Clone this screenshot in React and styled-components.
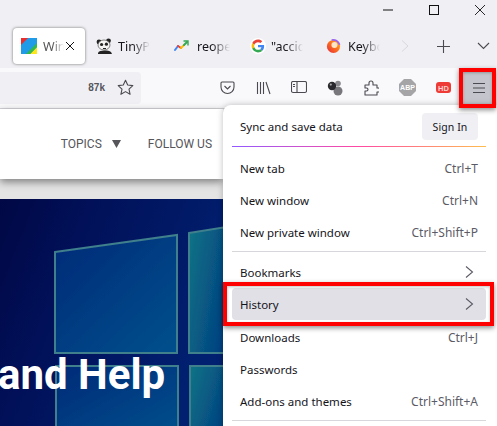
import React from "react";
import styled, { createGlobalStyle } from "styled-components";

const Global = createGlobalStyle`
  html, body { margin: 0; padding: 0; background: #fff; }
  * { box-sizing: border-box; }
  #root { width: 497px; height: 426px; }
`;

const Windowed = styled.div`
  position: relative;
  width: 497px;
  height: 426px;
  overflow: hidden;
  background: #f0f0f4;
  display: flex;
  flex-direction: column;
  font-family: "Noto Sans", "Open Sans", sans-serif;
  color: #15141a;
`;

const TitleBar = styled.div`
  height: 28px;
  display: flex;
  justify-content: flex-end;
  flex: none;
  margin-right: -6px;
`;
const WinButton = styled.div`
  width: 46px;
  height: 20px;
  display: flex;
  align-items: center;
  justify-content: center;
  color: #111;
`;

const TabStrip = styled.div`
  height: 40px;
  flex: none;
  display: flex;
  align-items: flex-start;
  padding-left: 13px;
`;
const ActiveTab = styled.div`
  width: 72px;
  height: 36px;
  background: #fff;
  border-radius: 4px;
  box-shadow: 0 0 3px rgba(0, 0, 0, 0.55);
  display: flex;
  align-items: center;
  padding-left: 8px;
  gap: 6px;
  flex: none;
`;
const Tab = styled.div`
  width: ${(p) => p.$w}px;
  height: 36px;
  display: flex;
  align-items: center;
  gap: ${(p) => p.$gap}px;
  padding-left: ${(p) => p.$pad}px;
  flex: none;
`;
const TabLabel = styled.span`
  font-size: 12.5px;
  width: ${(p) => p.$w}px;
  white-space: nowrap;
  color: ${(p) => p.$c || "#15141a"};
  -webkit-mask-image: linear-gradient(to right, #000 45%, transparent 100%);
  mask-image: linear-gradient(to right, #000 45%, transparent 100%);
`;
const CloseGlyph = styled.span`
  display: flex;
  margin-left: -5px;
`;
const StripTools = styled.div`
  display: flex;
  align-items: center;
  height: 36px;
  flex: none;
  margin-left: 9px;
`;
const StripButton = styled.div`
  width: ${(p) => p.$w}px;
  display: flex;
  justify-content: center;
  align-items: center;
`;

const Toolbar = styled.div`
  height: 41px;
  flex: none;
  background: #f9f9fb;
  border-bottom: 1px solid #d4d4d8;
  display: flex;
  align-items: center;
  padding-bottom: 1px;
`;
const UrlBar = styled.div`
  width: 141px;
  height: 32px;
  background: #f0f0f4;
  border-radius: 0 4px 4px 0;
  display: flex;
  align-items: center;
  justify-content: flex-end;
  padding-right: 7px;
  gap: 12px;
  flex: none;
`;
const Count = styled.span`
  font: 700 10px "Liberation Sans", Arial, sans-serif;
  color: #55555c;
`;
const ToolIcons = styled.div`
  margin-left: 68px;
  display: flex;
  align-items: center;
`;
const ToolIcon = styled.div`
  width: 36px;
  height: 32px;
  display: flex;
  align-items: center;
  justify-content: center;
  flex: none;
`;
const MenuButton = styled.div`
  width: 32px;
  height: 36px;
  background: #c4c4cc;
  display: flex;
  align-items: center;
  justify-content: center;
  margin-left: 2px;
  flex: none;
`;

const Page = styled.div`
  flex: 1;
  background: #e4e4e4;
  display: flex;
  flex-direction: column;
  width: 223px;
`;
const SiteHeader = styled.div`
  height: 70px;
  flex: none;
  background: #fff;
  box-shadow: 0 3px 8px rgba(0, 0, 0, 0.45);
  display: flex;
  align-items: center;
  justify-content: flex-end;
  padding: 0 11px 0 0;
  font: 400 12px Roboto, sans-serif;
  color: #55555a;
  position: relative;
`;
const NavItem = styled.span`
  display: flex;
  align-items: center;
  gap: 10px;
  margin-left: ${(p) => p.$ml || 0}px;
`;
const Spacer = styled.div`
  height: 20px;
  flex: none;
`;
const Hero = styled.div`
  flex: 1;
  position: relative;
  overflow: hidden;
  background: #010f55;
  display: flex;
  align-items: flex-end;
`;
const HeroArt = styled.svg`
  position: absolute;
  inset: 0;
`;
const HeroTitle = styled.h1`
  position: relative;
  margin: 0 0 26px -2px;
  font: 700 42px/50px Roboto, sans-serif;
  color: #fff;
  white-space: nowrap;
`;

const Menu = styled.div`
  position: absolute;
  left: 223px;
  top: 105px;
  width: 274px;
  height: 330px;
  background: #fff;
  border-radius: 8px 0 0 0;
  box-shadow: 0 0 6px rgba(0, 0, 0, 0.25);
  padding: 0 11px 0 9px;
  font-size: 11.5px;
`;
const SyncRow = styled.div`
  height: 41px;
  padding: 2px 8px 0;
  display: flex;
  justify-content: space-between;
  align-items: center;
`;
const SignIn = styled.div`
  width: 56px;
  height: 27px;
  background: #f0f0f4;
  border-radius: 4px;
  display: flex;
  align-items: center;
  justify-content: center;
  font-size: 10.5px;
  letter-spacing: 0.1px;
`;
const GradientRule = styled.div`
  height: 1px;
  background: linear-gradient(to right, #9059ff, #ff4aa2, #ffbd4f);
  margin-bottom: 5px;
`;
const Rule = styled.div`
  height: 1px;
  background: #d7d7db;
  margin: ${(p) => p.$m};
`;
const Row = styled.div`
  height: 32px;
  padding: 0 8px;
  display: flex;
  align-items: center;
  justify-content: space-between;
  border-radius: 4px;
  background: ${(p) => (p.$hover ? "#e0e0e6" : "transparent")};
  margin-bottom: ${(p) => (p.$hover ? "1px" : "0")};
`;
const Shortcut = styled.span`
  color: #5b5b66;
  font-size: 12px;
`;
const ChevronWrap = styled.span`
  display: flex;
  margin-right: 3px;
`;

const Callout = styled.div`
  position: absolute;
  left: ${(p) => p.$x}px;
  top: ${(p) => p.$y}px;
  width: ${(p) => p.$w}px;
  height: ${(p) => p.$h}px;
  border: 4px solid #fe0000;
  box-shadow: 0 2px 5px rgba(0, 0, 0, 0.45), inset 0 1px 3px rgba(0, 0, 0, 0.25);
  pointer-events: none;
`;

const Chevron = () => (
  <ChevronWrap>
    <svg width="12" height="14" viewBox="0 0 12 14" fill="none" stroke="#5b5b66" strokeWidth="1.1">
      <path d="M3 1.5 L9.5 7 L3 12.5" />
    </svg>
  </ChevronWrap>
);

const shortcuts = [
  ["New tab", "Ctrl+T"],
  ["New window", "Ctrl+N"],
  ["New private window", "Ctrl+Shift+P"],
];

export default function App() {
  return (
    <Windowed>
      <Global />
      <TitleBar>
        <WinButton>
          <svg width="12" height="12" viewBox="0 0 12 12"><path d="M1 6h10" stroke="#111" strokeWidth="1" /></svg>
        </WinButton>
        <WinButton>
          <svg width="12" height="12" viewBox="0 0 12 12"><rect x="1.5" y="1.5" width="9" height="9" fill="none" stroke="#111" /></svg>
        </WinButton>
        <WinButton>
          <svg width="12" height="12" viewBox="0 0 12 12"><path d="M1 1l10 10M11 1L1 11" stroke="#111" strokeWidth="0.9" /></svg>
        </WinButton>
      </TitleBar>

      <TabStrip>
        <ActiveTab>
          <svg width="16" height="16" viewBox="0 0 16 16">
            <rect width="16" height="16" fill="#1f9be8" />
            <path d="M0 0h7L0 7z" fill="#ea2c2c" />
            <path d="M16 9v7H9z" fill="#ffe619" />
            <path d="M16 5v4l-7 7H5z" fill="#33b84a" />
          </svg>
          <TabLabel $w={21} $c="#555">Win</TabLabel>
          <CloseGlyph>
            <svg width="10" height="10" viewBox="0 0 10 10"><path d="M1 1l8 8M9 1l-8 8" stroke="#15141a" strokeWidth="1" /></svg>
          </CloseGlyph>
        </ActiveTab>
        <Tab $w={76} $gap={5} $pad={11}>
          <svg width="17" height="16" viewBox="0 0 17 16">
            <circle cx="3" cy="4" r="2.4" fill="#222" />
            <circle cx="12.5" cy="2.8" r="2.4" fill="#222" />
            <ellipse cx="8" cy="7" rx="6" ry="5" fill="#f4f4f4" stroke="#333" strokeWidth=".6" />
            <circle cx="5.6" cy="6.5" r="1.6" fill="#222" />
            <circle cx="10.4" cy="6.2" r="1.6" fill="#222" />
            <path d="M2 15c1-3 10-3 13-1l1 2H2z" fill="#222" />
            <path d="M7 10h3v1H7z" fill="#222" />
          </svg>
          <TabLabel $w={32}>TinyPN</TabLabel>
        </Tab>
        <Tab $w={76} $gap={8} $pad={13}>
          <svg width="15" height="12" viewBox="0 0 15 12" fill="none" strokeWidth="2" strokeLinecap="round">
            <path d="M1 10l3-4" stroke="#4285f4" />
            <path d="M4 6l3 2" stroke="#ea4335" />
            <path d="M7 8l3-3" stroke="#fbbc05" />
            <path d="M10 5l3-3" stroke="#34a853" />
            <path d="M10 1h4v4" stroke="#34a853" strokeWidth="1.4" />
          </svg>
          <TabLabel $w={33}>reopen</TabLabel>
        </Tab>
        <Tab $w={75} $gap={5} $pad={13}>
          <svg width="16" height="16" viewBox="-6 -6 60 60">
            <circle cx="24" cy="24" r="30" fill="#fff" />
            <path fill="#EA4335" d="M24 9.5c3.5 0 6.700 1.300 9.100 3.500l6.800-6.800C35.900 2.400 30.400 0 24 0 14.600 0 6.500 5.400 2.600 13.200l7.900 6.100C12.400 13.700 17.700 9.500 24 9.500z" />
            <path fill="#4285F4" d="M46.900 24.500c0-1.600-.1-3.100-.4-4.500H24v9h12.900c-.6 3-2.200 5.500-4.700 7.200l7.600 5.900c4.400-4.100 7.100-10.200 7.100-17.600z" />
            <path fill="#FBBC05" d="M10.500 28.700c-.5-1.500-.8-3-.8-4.700s.3-3.200.8-4.700l-7.900-6.100C.9 16.500 0 20.100 0 24s.9 7.500 2.600 10.800l7.900-6.100z" />
            <path fill="#34A853" d="M24 48c6.500 0 11.900-2.100 15.900-5.900l-7.600-5.900c-2.100 1.400-4.900 2.300-8.300 2.300-6.300 0-11.600-4.200-13.500-9.900l-7.900 6.100C6.500 42.600 14.600 48 24 48z" />
          </svg>
          <TabLabel $w={32}>"accid</TabLabel>
        </Tab>
        <Tab $w={77} $gap={7} $pad={14}>
          <svg width="15" height="16" viewBox="0 0 16 16">
            <defs>
              <linearGradient id="ff" x1="0" y1="1" x2="1" y2="0">
                <stop offset="0" stopColor="#e6283c" />
                <stop offset=".6" stopColor="#ff7a1a" />
                <stop offset="1" stopColor="#ffc02e" />
              </linearGradient>
            </defs>
            <circle cx="8" cy="8.500" r="7" fill="url(#ff)" />
            <circle cx="9" cy="7" r="3.200" fill="#fde6c8" />
            <path d="M6 1.600a7 7 0 0 1 8.500 5" stroke="#9a62ee" strokeWidth="1.800" fill="none" />
          </svg>
          <TabLabel $w={32}>Keybo</TabLabel>
        </Tab>
        <StripTools>
          <StripButton $w={14}>
            <svg width="8" height="12" viewBox="0 0 8 12" fill="none" stroke="#d8d8dc"><path d="M1 .5L7 6 1 11.500" /></svg>
          </StripButton>
          <StripButton $w={62}>
            <svg width="13" height="13" viewBox="0 0 13 13"><path d="M6.500 0v13M0 6.500h13" stroke="#4a4a50" strokeWidth="1.100" /></svg>
          </StripButton>
          <StripButton $w={18}>
            <svg width="13" height="8" viewBox="0 0 13 8" fill="none" stroke="#4a4a50" strokeWidth="1.100"><path d="M1 1l5.500 5.500L12 1" /></svg>
          </StripButton>
        </StripTools>
      </TabStrip>

      <Toolbar>
        <UrlBar>
          <Count>87k</Count>
          <svg width="17" height="17" viewBox="0 0 17 17" fill="none" stroke="#4a4a50" strokeWidth="1.100">
            <path d="M8.500 1.200l2.200 4.800 5.100.6-3.800 3.500 1.100 5.200-4.600-2.700-4.600 2.700 1.100-5.200L1.200 6.600l5.100-.6z" strokeLinejoin="round" />
          </svg>
        </UrlBar>
        <ToolIcons>
          <ToolIcon>
            <svg width="15" height="14" viewBox="0 0 15 14" fill="none" stroke="#4a4a50" strokeWidth="1.100">
              <path d="M2 1h11a1 1 0 0 1 1 1v4a6.500 6.500 0 0 1-13 0V2a1 1 0 0 1 1-1z" />
              <path d="M4.500 5l3 3 3-3" />
            </svg>
          </ToolIcon>
          <ToolIcon>
            <svg width="15" height="14" viewBox="0 0 15 14" fill="none" stroke="#4a4a50" strokeWidth="1.100">
              <path d="M1.500 1v12M4.500 1v12M7.500 1v12M10 1l4 12" />
            </svg>
          </ToolIcon>
          <ToolIcon>
            <svg width="16" height="13" viewBox="0 0 16 13" fill="none" stroke="#4a4a50" strokeWidth="1.100">
              <rect x=".5" y=".5" width="15" height="11" rx="1.500" />
              <path d="M6 1v10M2 3.500h2M2 5.500h2" />
            </svg>
          </ToolIcon>
          <ToolIcon>
            <svg width="16" height="16" viewBox="0 0 16 16">
              <circle cx="11" cy="3.500" r="2.800" fill="#8a8a8e" />
              <circle cx="11" cy="11" r="4.500" fill="#77777c" />
              <circle cx="5" cy="6" r="4.200" fill="#2a2a2e" />
              <circle cx="3.800" cy="4.600" r="1.100" fill="#aaa" />
            </svg>
          </ToolIcon>
          <ToolIcon>
            <svg width="15" height="16" viewBox="0 0 15 16" fill="none" stroke="#4a4a50" strokeWidth="1.100">
              <path d="M1 5h4V3a2 2 0 0 1 4 0v2h4v3h1a2 2 0 0 1 0 4h-1v3H1v-4h1.500a1.500 1.500 0 0 0 0-3H1z" strokeLinejoin="round" />
            </svg>
          </ToolIcon>
          <ToolIcon>
            <svg width="17" height="17" viewBox="0 0 17 17">
              <path d="M5 0h7l5 5v7l-5 5H5l-5-5V5z" fill="#a5a5a8" />
              <text x="8.500" y="11" fontFamily="Liberation Sans" fontWeight="700" fontSize="7" fill="#fff" textAnchor="middle">ABP</text>
            </svg>
          </ToolIcon>
          <ToolIcon>
            <svg width="15" height="11" viewBox="0 0 15 11">
              <rect width="15" height="11" rx="3" fill="#ee3b36" />
              <text x="7.500" y="8.500" fontFamily="Liberation Sans" fontWeight="700" fontSize="7.500" fill="#ffd0cc" textAnchor="middle">HD</text>
            </svg>
          </ToolIcon>
          <MenuButton>
            <svg width="12" height="12" viewBox="0 0 12 12" fill="none" stroke="#4a4a50" strokeWidth="1">
              <path d="M0 1.500h12M0 6h12M0 10.500h12" />
            </svg>
          </MenuButton>
        </ToolIcons>
      </Toolbar>

      <Page>
        <SiteHeader>
          <NavItem>
            TOPICS
            <svg width="9" height="8" viewBox="0 0 9 8"><path d="M0 0h9L4.500 8z" fill="#55555a" /></svg>
          </NavItem>
          <NavItem $ml={27}>FOLLOW US</NavItem>
        </SiteHeader>
        <Spacer />
        <Hero>
          <HeroArt width="223" height="227" viewBox="0 0 223 227">
            <defs>
              <linearGradient id="bg" x1="0" y1="0" x2="1" y2="0.4">
                <stop offset="0" stopColor="#010845" />
                <stop offset="0.35" stopColor="#011058" />
                <stop offset="1" stopColor="#012070" />
              </linearGradient>
              <linearGradient id="pane" x1="0" y1="0" x2="1" y2="1">
                <stop offset="0" stopColor="#022a78" />
                <stop offset="1" stopColor="#02508c" />
              </linearGradient>
              <linearGradient id="pane2" x1="0" y1="0" x2="1" y2="0.4">
                <stop offset="0" stopColor="#0c7486" />
                <stop offset="1" stopColor="#023a80" />
              </linearGradient>
              <filter id="soft"><feGaussianBlur stdDeviation="0.5" /></filter>
            </defs>
            <rect width="223" height="227" fill="url(#bg)" />
            <g stroke="#3f7f8c" strokeWidth="2" filter="url(#soft)">
              <path d="M55 53L177 36v118H55z" fill="url(#pane)" />
              <path d="M189 34L240 26v128H189z" fill="url(#pane2)" />
              <path d="M56 167H178v70H56z" fill="url(#pane)" />
              <path d="M190 167H240v70H190z" fill="url(#pane2)" />
            </g>
          </HeroArt>
          <HeroTitle>and Help</HeroTitle>
        </Hero>
      </Page>

      <Menu>
        <SyncRow>
          Sync and save data
          <SignIn>Sign In</SignIn>
        </SyncRow>
        <GradientRule />
        {shortcuts.map(([a, b]) => (
          <Row key={a}>
            {a}
            <Shortcut>{b}</Shortcut>
          </Row>
        ))}
        <Rule $m="3px 0 4px" />
        <Row>
          Bookmarks
          <Chevron />
        </Row>
        <Row $hover>
          History
          <Chevron />
        </Row>
        <Row>
          Downloads
          <Shortcut>Ctrl+J</Shortcut>
        </Row>
        <Row>Passwords</Row>
        <Row>
          Add-ons and themes
          <Shortcut>Ctrl+Shift+A</Shortcut>
        </Row>
        <Rule $m="3px 0" />
      </Menu>

      <Callout $x={459} $y={68} $w={37} $h={40} />
      <Callout $x={223} $y={282} $w={271} $h={44} />
    </Windowed>
  );
}
